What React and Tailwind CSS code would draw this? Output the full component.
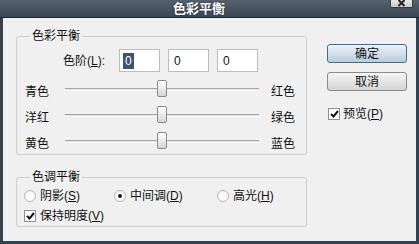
import React from "react";

function Slider({ left, right }) {
  return (
    <div className="flex h-[26px] items-center pl-[8px]">
      <span className="w-[40px] pt-[5px]">{left}</span>
      <div className="relative h-[3px] w-[194px] border-t border-[#a5a5a5] bg-[#e4e4e4] border-b border-b-white">
        <div className="absolute left-[92px] top-[-9px] h-[17px] w-[10px] rounded-[2px] border border-[#8a8a8a] bg-gradient-to-b from-white to-[#d6d6d6]" />
      </div>
      <span className="ml-[12px] pt-[5px]">{right}</span>
    </div>
  );
}

function Radio({ checked }) {
  return (
    <span className="flex h-[12px] w-[12px] items-center justify-center rounded-full border border-[#b4b4b4] bg-gradient-to-b from-[#f4f4f4] to-white">
      {checked && <span className="h-[4px] w-[4px] rounded-full bg-[#1c1c1c]" />}
    </span>
  );
}

function Check() {
  return (
    <span className="flex h-[12px] w-[12px] items-center justify-center border border-[#8e8f8f] bg-white">
      <svg width="9" height="8" viewBox="0 0 9 8">
        <path d="M1 4 L3.5 6.5 L8 1" fill="none" stroke="#111" strokeWidth="2" />
      </svg>
    </span>
  );
}

export default function App() {
  return (
    <div className="flex h-[244px] w-[419px] flex-col bg-[#36414f] font-['Liberation_Sans','Noto_Sans_CJK_SC',sans-serif] text-[12px] leading-[16px] text-[#111]">
      <div className="relative flex h-[18px] items-center justify-center border-b border-[#1d2530] bg-gradient-to-b from-[#56616f] to-[#3c4756] pr-[21px]">
        <span className="text-[13px] font-bold text-white [text-shadow:0_0_2px_#1b222c]">色彩平衡</span>
        <div className="absolute right-[6px] top-0 flex h-[8px] w-[23px] items-end justify-center overflow-hidden rounded-b-[2px] border border-t-0 border-[#3a3a3a] bg-gradient-to-b from-[#e8e8e8] to-[#c8c8c8]">
          <svg width="9" height="7" viewBox="0 0 9 7" className="mb-[0px]">
            <path d="M1.5 0 L7.5 6 M7.5 0 L1.5 6" stroke="#222" strokeWidth="2" fill="none" />
          </svg>
        </div>
      </div>
      <div className="mx-[3px] mb-[3px] flex flex-1 bg-[#f0f0f0] pl-[13px] pt-[10px]">
        <div className="flex w-[291px] flex-col">
          <fieldset className="rounded-[3px] border border-[#cdcdcd]">
            <legend className="ml-[13px] px-[2px]">色彩平衡</legend>
            <div className="mt-[5px] flex items-center pl-[46px]">
              <span className="w-[56px]">
                色阶(<u>L</u>):
              </span>
              <div className="flex gap-[8px]">
                <div className="flex h-[23px] w-[41px] items-center border border-[#bcbcbc] bg-white pl-[3px]">
                  <span className="bg-[#3d5370] px-[2px] text-white">0</span>
                </div>
                <div className="flex h-[23px] w-[41px] items-center border border-[#bcbcbc] bg-white pl-[5px]">0</div>
                <div className="flex h-[23px] w-[41px] items-center border border-[#bcbcbc] bg-white pl-[5px]">0</div>
              </div>
            </div>
            <div className="mt-[4px]">
              <Slider left="青色" right="红色" />
              <Slider left="洋红" right="绿色" />
              <Slider left="黄色" right="蓝色" />
            </div>
          </fieldset>
          <fieldset className="mt-[14px] rounded-[3px] border border-[#cdcdcd]">
            <legend className="ml-[13px] px-[2px]">色调平衡</legend>
            <div className="mt-[1px] flex h-[20px] items-center pl-[7px]">
              <div className="flex w-[90px] items-center gap-[4px]">
                <Radio />
                <span>
                  阴影(<u>S</u>)
                </span>
              </div>
              <div className="flex w-[103px] items-center gap-[4px]">
                <Radio checked />
                <span>
                  中间调(<u>D</u>)
                </span>
              </div>
              <div className="flex items-center gap-[4px]">
                <Radio />
                <span>
                  高光(<u>H</u>)
                </span>
              </div>
            </div>
            <div className="flex h-[20px] items-center gap-[4px] pl-[7px]">
              <Check />
              <span>
                保持明度(<u>V</u>)
              </span>
            </div>
          </fieldset>
        </div>
        <div className="ml-[20px] flex w-[80px] flex-col pt-[16px]">
          <button className="h-[19px] rounded-[3px] border border-[#3c6f98] bg-gradient-to-b from-[#eef3f8] to-[#b9cbdc] text-[12px] leading-[16px]">
            确定
          </button>
          <button className="mt-[9px] h-[19px] rounded-[3px] border border-[#8a8a8a] bg-gradient-to-b from-[#f6f6f6] to-[#d4d4d4] text-[12px] leading-[16px]">
            取消
          </button>
          <div className="mt-[15px] flex items-center gap-[3px] pl-[1px]">
            <Check />
            <span>
              预览(<u>P</u>)
            </span>
          </div>
        </div>
      </div>
    </div>
  );
}
